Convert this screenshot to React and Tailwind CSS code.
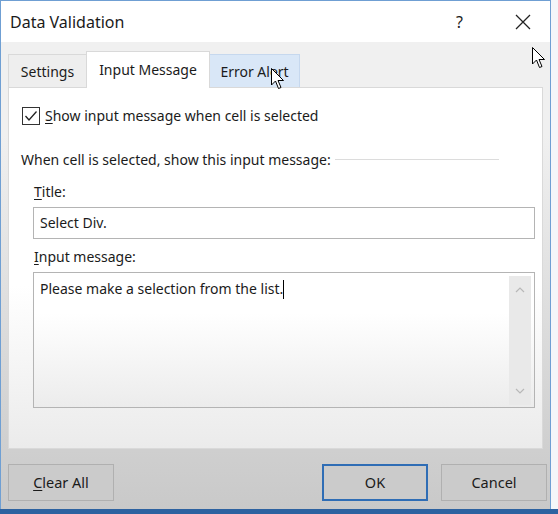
import React from "react";

function Cursor({ className }) {
  return (
    <svg className={className} width="14" height="22" viewBox="0 0 14 22">
      <path
        d="M0.5 0.5 L0.5 17 L4.5 13 L7.5 20.5 L10 19.5 L7 12.5 L12.5 12.5 Z"
        fill="#ffffff"
        stroke="#000000"
        strokeWidth="1"
        strokeLinejoin="miter"
      />
    </svg>
  );
}

function Btn({ children, primary }) {
  return (
    <div
      className={
        "w-[106px] h-[37px] flex items-center justify-center bg-[#cbcbcb] " +
        (primary ? "border-2 border-[#2f6db5]" : "border border-[#b0b0b0]")
      }
    >
      {children}
    </div>
  );
}

export default function App() {
  return (
    <div
      className="relative w-[558px] h-[514px] bg-[#f4f6f9] flex flex-col text-[#1b1b1b] overflow-hidden"
      style={{ fontFamily: '"Noto Sans", "Open Sans", sans-serif' }}
    >
      <div className="flex-1 flex">
        <div className="w-[551px] h-[509px] flex flex-col border-x border-t border-[#6f9fd3]">
          {/* Title bar */}
          <div className="h-[41px] bg-white flex items-center pl-[9px] shrink-0">
            <span className="text-[16px] leading-none">Data Validation</span>
            <span className="ml-auto text-[16px] leading-none mr-[52px]">?</span>
            <svg width="16" height="16" viewBox="0 0 16 16" className="mr-[19px]">
              <path d="M1 1 L15 15 M15 1 L1 15" stroke="#222" strokeWidth="1.3" />
            </svg>
          </div>
          {/* Body */}
          <div className="flex-1 flex flex-col bg-linear-to-b from-[#f0f0f0] from-20% to-[#c9c9c9] pt-[9px]">
            {/* Tabs */}
            <div className="relative z-10 h-[37px] -mb-px ml-[7px] flex items-start text-[14px]">
              <div className="mt-[3px] h-[33px] w-[78px] flex items-center justify-center border-l border-t border-[#d9d9d9] bg-[#eeeeee]">
                Settings
              </div>
              <div className="h-[37px] w-[124px] flex items-center justify-center pb-[2px] bg-white border-x border-t border-[#d9d9d9]">
                Input Message
              </div>
              <div className="mt-[3px] h-[33px] w-[90px] flex items-center justify-center bg-[#d9e7f7] border-t border-r border-[#c6d8ee]">
                Error Alert
              </div>
            </div>
            {/* Panel */}
            <div className="mx-[7px] h-[362px] border border-[#d9d9d9] bg-linear-to-b from-white from-55% to-[#ebebeb] flex flex-col pl-[12px] text-[14px]">
              <div className="mt-[19px] h-[18px] flex items-center">
                <div className="ml-[1px] w-[18px] h-[18px] border border-[#333] bg-white flex items-center justify-center">
                  <svg width="14" height="12" viewBox="0 0 14 12">
                    <path d="M1.5 6 L5 10 L12.5 1.5" fill="none" stroke="#222" strokeWidth="1.3" />
                  </svg>
                </div>
                <span className="ml-[5px] leading-none">
                  <span className="underline underline-offset-2">S</span>how input message when cell is selected
                </span>
              </div>
              <div className="mt-[25px] h-[20px] flex items-center mr-[43px]">
                <span className="leading-none whitespace-nowrap">When cell is selected, show this input message:</span>
                <div className="flex-1 h-px bg-[#dcdcdc] ml-[4px] -mt-[2px]" />
              </div>
              <div className="ml-[12px] flex flex-col">
                <div className="mt-[12px] h-[20px] flex items-center pl-[1px] leading-none">
                  <span>
                    <span className="underline underline-offset-2">T</span>itle:
                  </span>
                </div>
                <div className="mt-[5px] w-[502px] h-[32px] border border-[#b4b4b4] bg-white flex items-center pl-[6px] leading-none">
                  Select Div.
                </div>
                <div className="mt-[8px] h-[20px] flex items-center pl-[1px] leading-none">
                  <span>
                    <span className="underline underline-offset-2">I</span>nput message:
                  </span>
                </div>
                <div className="mt-[5px] w-[502px] h-[136px] border border-[#b4b4b4] bg-linear-to-b from-white from-30% to-[#ececec] flex">
                  <div className="flex-1 pl-[6px] pt-[6px] leading-[20px] flex items-start">
                    <span>Please make a selection from the list.</span>
                    <span className="w-px h-[19px] bg-black mt-[1px]" />
                  </div>
                  <div className="w-[22px] mt-[3px] mb-[2px] mr-[3px] bg-[#e9e9e9] flex flex-col items-center justify-between py-[11px]">
                    <svg width="10" height="6" viewBox="0 0 10 6">
                      <path d="M1 5 L5 1 L9 5" fill="none" stroke="#b8b8b8" strokeWidth="1.2" />
                    </svg>
                    <svg width="10" height="6" viewBox="0 0 10 6">
                      <path d="M1 1 L5 5 L9 1" fill="none" stroke="#b8b8b8" strokeWidth="1.2" />
                    </svg>
                  </div>
                </div>
              </div>
            </div>
            {/* Buttons */}
            <div className="mt-[15px] ml-[7px] flex text-[14.5px]">
              <Btn>
                <span>
                  <span className="underline underline-offset-2">C</span>lear All
                </span>
              </Btn>
              <div className="ml-[208px]">
                <Btn primary>OK</Btn>
              </div>
              <div className="ml-[13px]">
                <Btn>Cancel</Btn>
              </div>
            </div>
          </div>
        </div>
      </div>
      <div className="h-[5px] bg-[#2d62a0] shrink-0" />
      <Cursor className="absolute z-20 left-[532px] top-[47px]" />
      <Cursor className="absolute z-20 left-[271px] top-[68px]" />
    </div>
  );
}
